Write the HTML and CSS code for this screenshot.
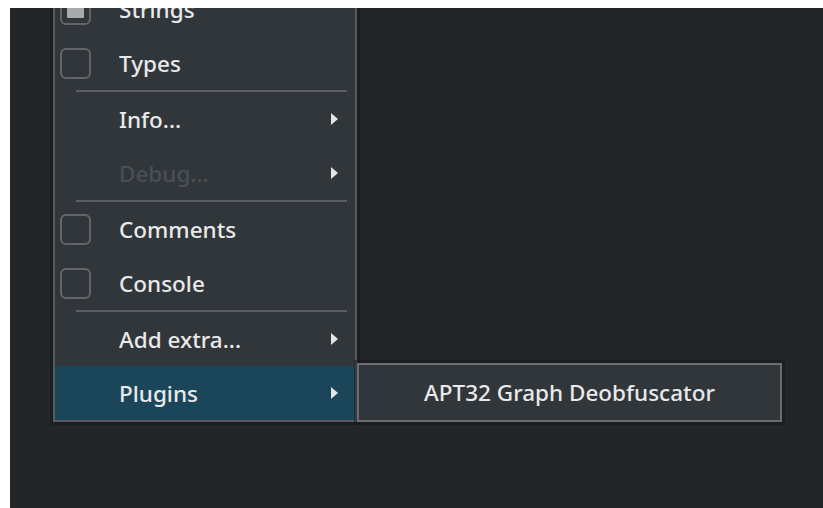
FILE: index.html
```html
<!DOCTYPE html>
<html lang="en">
<head>
<meta charset="utf-8">
<title>Menu</title>
<link rel="stylesheet" href="styles.css">
</head>
<body>
<div class="screen">
  <div class="menu">
    <div class="item"><span class="box partial"></span><span class="label">Strings</span></div>
    <div class="item"><span class="box"></span><span class="label">Types</span></div>
    <div class="sep"></div>
    <div class="item"><span class="nobox"></span><span class="label">Info...</span><svg class="arrow" viewBox="0 0 7 12"><polygon points="0,0 7,6 0,12"/></svg></div>
    <div class="item disabled"><span class="nobox"></span><span class="label">Debug...</span><svg class="arrow" viewBox="0 0 7 12"><polygon points="0,0 7,6 0,12"/></svg></div>
    <div class="sep"></div>
    <div class="item"><span class="box"></span><span class="label">Comments</span></div>
    <div class="item"><span class="box"></span><span class="label">Console</span></div>
    <div class="sep"></div>
    <div class="item"><span class="nobox"></span><span class="label">Add extra...</span><svg class="arrow" viewBox="0 0 7 12"><polygon points="0,0 7,6 0,12"/></svg></div>
    <div class="item active"><span class="nobox"></span><span class="label">Plugins</span><svg class="arrow" viewBox="0 0 7 12"><polygon points="0,0 7,6 0,12"/></svg></div>
  </div>
  <div class="submenu">
    <div class="subitem">APT32 Graph Deobfuscator</div>
  </div>
</div>
</body>
</html>
```
FILE: styles.css
```css
html, body {
  margin: 0;
  padding: 0;
  background: #ffffff;
}

body {
  padding: 8px 0 0 10px;
  font-family: "Noto Sans", "Open Sans", sans-serif;
  font-size: 22.5px;
  font-weight: 500;
  color: #e8e9ea;
}

.screen {
  position: relative;
  height: 500px;
  background: #232629;
  overflow: hidden;
}

/* popup menu, partly scrolled above the top edge */
.menu {
  position: absolute;
  left: 43px;
  top: -28px;
  width: 300px;
  background: #31363b;
  border: 2px solid #575b5f;
  box-shadow: 0 0 0 3px rgba(20, 22, 24, 0.45);
  display: flex;
  flex-direction: column;
}

.item {
  height: 54px;
  display: flex;
  align-items: center;
  padding-left: 5px;
}

.item.active {
  background: #1b465a;
}

.item.disabled .label {
  color: #4a4f54;
}

.box,
.nobox {
  width: 31px;
  height: 31px;
  box-sizing: border-box;
  flex: none;
}

.box {
  border: 2px solid #62666a;
  border-radius: 6px;
  position: relative;
}

.box.partial::after {
  content: "";
  position: absolute;
  left: 5px;
  top: 5px;
  right: 5px;
  bottom: 5px;
  background: #a9aaab;
  border-radius: 1px;
}

.label {
  margin-left: 28px;
  flex: 1;
  white-space: nowrap;
}

.arrow {
  width: 7px;
  height: 12px;
  margin-right: 17px;
  flex: none;
}

.arrow polygon {
  fill: #e3e4e5;
}

.sep {
  height: 2px;
  margin: 0 8px 0 21px;
  background: #5a5e62;
}

/* child menu opened from "Plugins" */
.submenu {
  position: absolute;
  left: 347px;
  top: 355px;
  width: 421px;
  height: 55px;
  background: #31363b;
  border: 2px solid #6a6e72;
  box-shadow: 0 0 0 3px rgba(20, 22, 24, 0.45);
}

.subitem {
  height: 55px;
  display: flex;
  align-items: center;
  justify-content: center;
  white-space: nowrap;
}
```
